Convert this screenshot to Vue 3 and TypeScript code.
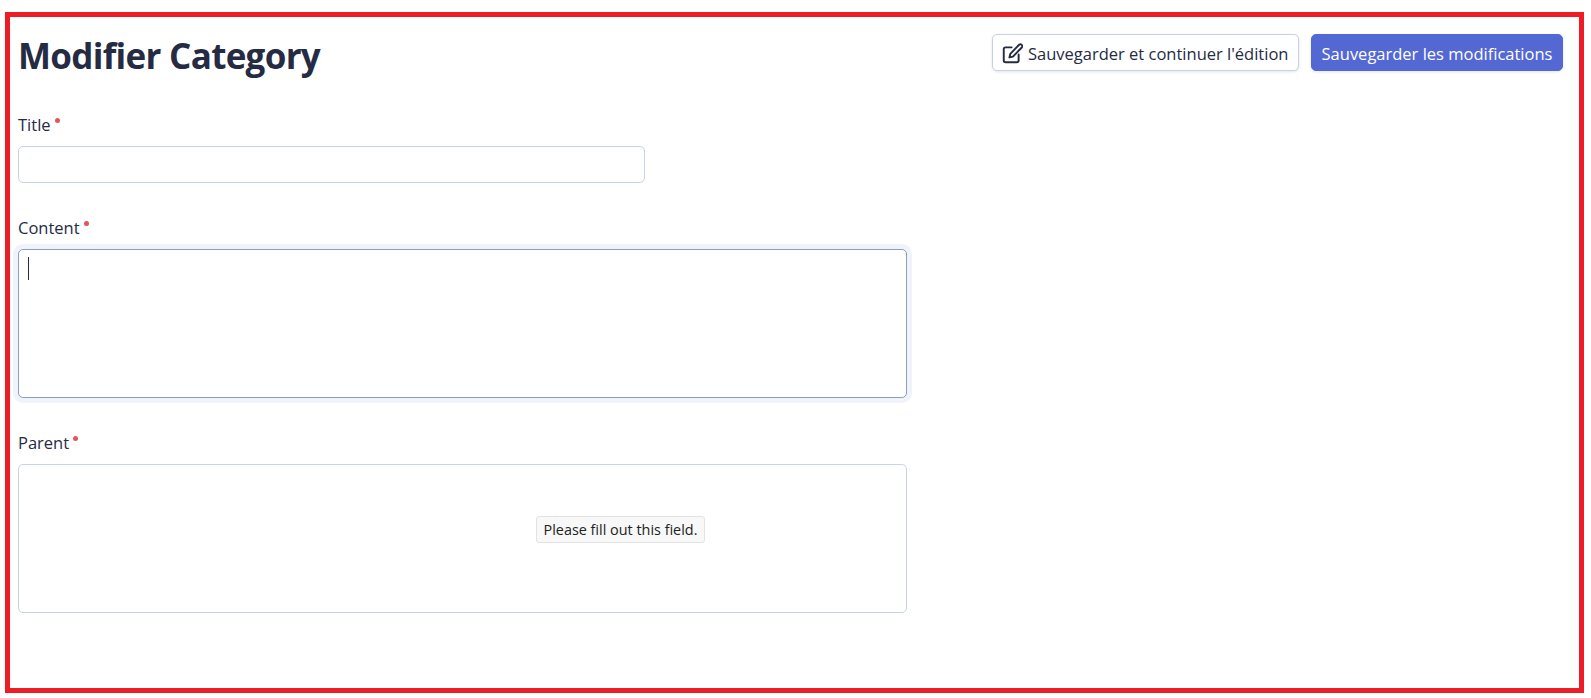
<script setup lang="ts">
const title = 'Modifier Category'
</script>

<template>
  <div class="frame">
    <div class="page">
      <div class="header">
        <h1>{{ title }}</h1>
        <div class="actions">
          <button class="btn btn-light" type="button">
            <svg class="icon" viewBox="0 0 24 24" fill="none" stroke="currentColor" stroke-width="2.200" stroke-linecap="round" stroke-linejoin="round">
              <path d="M11 5H4a2 2 0 0 0-2 2v13a2 2 0 0 0 2 2h13a2 2 0 0 0 2-2v-7" />
              <path d="M19.500 2a2.200 2.200 0 0 1 3.100 3.100L12.500 15.500l-4 1 1-4z" />
            </svg>
            Sauvegarder et continuer l'édition
          </button>
          <button class="btn btn-primary" type="button">Sauvegarder les modifications</button>
        </div>
      </div>

      <div class="field">
        <label>Title<span class="req"></span></label>
        <input class="control short" type="text" />
      </div>

      <div class="field">
        <label>Content<span class="req"></span></label>
        <div class="box-wrap">
          <textarea class="control area focused"></textarea>
          <span class="caret"></span>
        </div>
      </div>

      <div class="field">
        <label>Parent<span class="req"></span></label>
        <div class="box-wrap">
          <textarea class="control area"></textarea>
          <span class="tip">Please fill out this field.</span>
        </div>
      </div>
    </div>
  </div>
</template>

<style>
html, body {
  margin: 0;
  background: #fff;
}
</style>

<style scoped>
.frame {
  box-sizing: border-box;
  width: 1579px;
  height: 681px;
  margin: 12px 0 0 5px;
  border: 5px solid #ee1c25;
  font-family: "Open Sans", "Noto Sans", sans-serif;
  color: #252b43;
}

.page {
  padding: 17px 16px 0 8px;
}

.header {
  display: flex;
  justify-content: space-between;
  align-items: center;
  height: 37px;
  margin-bottom: 41px;
}

h1 {
  margin: 6px 0 0 0;
  font-size: 35px;
  line-height: 44px;
  font-weight: 700;
  letter-spacing: -0.7px;
}

.actions {
  display: flex;
  gap: 12px;
}

.btn {
  display: flex;
  align-items: center;
  box-sizing: border-box;
  height: 37px;
  padding: 1px 9px 0;
  border-radius: 5px;
  font-family: inherit;
  font-size: 16.5px;
  white-space: nowrap;
  box-shadow: 0 1px 3px rgba(30, 40, 80, 0.12);
}

.btn-light {
  width: 307px;
  gap: 5px;
  background: #fff;
  border: 1px solid #c8d2e4;
  color: #252b43;
}

.btn-primary {
  width: 252px;
  justify-content: center;
  background: #5468d4;
  border: 1px solid #5468d4;
  color: #fff;
}

.icon {
  width: 21px;
  height: 21px;
  flex: none;
}

.field {
  margin-bottom: 32px;
}

label {
  display: block;
  height: 22px;
  padding-top: 2px;
  margin-bottom: 10px;
  font-size: 16.5px;
  line-height: 22px;
}

.req {
  display: inline-block;
  width: 5px;
  height: 5px;
  margin-left: 4px;
  border-radius: 50%;
  background: #e5545a;
  vertical-align: 8px;
}

.control {
  display: block;
  box-sizing: border-box;
  padding: 0;
  background: #fff;
  border: 1px solid #c8d4e6;
  border-radius: 5px;
  outline: none;
  resize: none;
}

.short {
  width: 627px;
  height: 37px;
}

.area {
  width: 889px;
  height: 149px;
}

.focused {
  border-color: #8b9ebb;
  box-shadow: 0 0 0 5px #f0f3f9;
}

.box-wrap {
  position: relative;
  width: 889px;
}

.caret {
  position: absolute;
  left: 10px;
  top: 8px;
  width: 1px;
  height: 23px;
  background: #252b43;
}

.tip {
  position: absolute;
  left: 518px;
  top: 52px;
  box-sizing: border-box;
  width: 169px;
  height: 27px;
  background: #f8f8f8;
  border: 1px solid #e2e2e2;
  border-radius: 3px;
  font-size: 14.4px;
  line-height: 25px;
  text-align: center;
  color: #222;
}
</style>
